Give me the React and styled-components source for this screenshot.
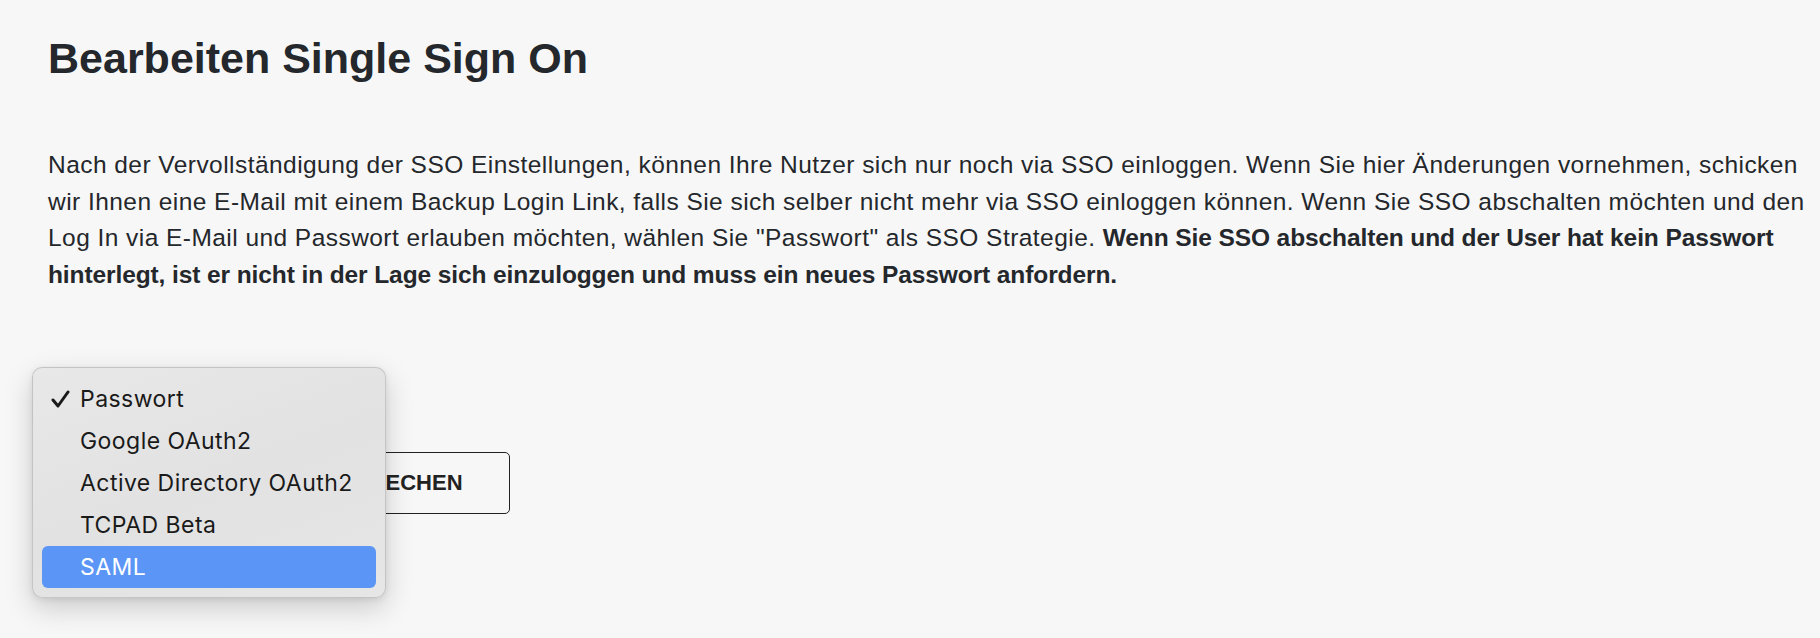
import styled, { createGlobalStyle } from "styled-components";

const COLORS = {
  page: "#f7f7f7",
  text: "#24272b",
  highlight: "#5b95f6",
};

const GlobalStyle = createGlobalStyle`
  html, body {
    margin: 0;
    padding: 0;
    background: ${COLORS.page};
  }
  body {
    font-family: "Liberation Sans", Arial, Helvetica, sans-serif;
    color: ${COLORS.text};
  }
`;

const Page = styled.main`
  min-height: 638px;
  box-sizing: border-box;
  padding: 34px 14px 0 48px;
`;

const Title = styled.h1`
  margin: 0;
  font-size: 43px;
  line-height: 1.15;
  font-weight: 700;
`;

const Intro = styled.p`
  margin: 64px 0 0;
  font-size: 24.5px;
  letter-spacing: 0.45px;
  line-height: 36.5px;
  strong {
    font-weight: 700;
    letter-spacing: -0.1px;
  }
`;

const Form = styled.form`
  position: relative;
  margin-top: 85px;
`;

const SelectField = styled.div`
  width: 300px;
  height: 42px;
  box-sizing: border-box;
  border: 1px solid #c8c8c8;
  border-radius: 4px;
  background: #fff;
  font-size: 20px;
  line-height: 40px;
  padding: 0 12px;
`;

const ButtonRow = styled.div`
  display: flex;
  gap: 16px;
  margin-top: 32px;
`;

const Button = styled.button`
  height: 62px;
  padding: 0 46px;
  border: 1px solid #222;
  border-radius: 5px;
  background: ${(p) => (p.$primary ? "#222" : "transparent")};
  color: ${(p) => (p.$primary ? "#fff" : "#222")};
  font-family: "Liberation Sans", Arial, sans-serif;
  font-size: 22px;
  font-weight: 700;
  text-transform: uppercase;
  cursor: pointer;
`;

const SaveButton = styled(Button)`
  width: 211px;
  padding: 0;
`;

const Menu = styled.ul`
  position: absolute;
  top: -11px;
  left: -16px;
  width: 354px;
  box-sizing: border-box;
  margin: 0;
  padding: 10px 9px 9px;
  list-style: none;
  border: 1px solid rgba(0, 0, 0, 0.14);
  border-radius: 10px;
  background: linear-gradient(160deg, #e8e8e8 0%, #e2e2e2 50%, #e6e6e6 100%);
  box-shadow: 0 10px 28px rgba(0, 0, 0, 0.18), 0 2px 6px rgba(0, 0, 0, 0.08);
  font-family: Inter, "Noto Sans", sans-serif;
`;

const Option = styled.li`
  position: relative;
  height: 42px;
  display: flex;
  align-items: center;
  padding-left: 38px;
  border-radius: 6px;
  font-size: 23px;
  letter-spacing: 0.45px;
  color: ${(p) => (p.$active ? "#fff" : "#1a1a1a")};
  background: ${(p) => (p.$active ? COLORS.highlight : "transparent")};
`;

const Check = styled.svg`
  position: absolute;
  left: 9px;
  top: 12px;
  width: 19px;
  height: 18px;
`;

const options = ["Passwort", "Google OAuth2", "Active Directory OAuth2", "TCPAD Beta", "SAML"];

export default function App() {
  const selected = "Passwort";
  const hovered = "SAML";

  return (
    <>
      <GlobalStyle />
      <Page>
        <Title>Bearbeiten Single Sign On</Title>
        <Intro>
          Nach der Vervollständigung der SSO Einstellungen, können Ihre Nutzer sich nur noch via SSO
          einloggen. Wenn Sie hier Änderungen vornehmen, schicken wir Ihnen eine E-Mail mit einem Backup
          Login Link, falls Sie sich selber nicht mehr via SSO einloggen können. Wenn Sie SSO abschalten
          möchten und den Log In via E-Mail und Passwort erlauben möchten, wählen Sie "Passwort" als SSO
          Strategie.{" "}
          <strong>
            Wenn Sie SSO abschalten und der User hat kein Passwort hinterlegt, ist er nicht in der Lage
            sich einzuloggen und muss ein neues Passwort anfordern.
          </strong>
        </Intro>
        <Form onSubmit={(e) => e.preventDefault()}>
          <SelectField>{selected}</SelectField>
          <ButtonRow>
            <SaveButton $primary type="submit">Speichern</SaveButton>
            <Button type="button">Abbrechen</Button>
          </ButtonRow>
          <Menu>
            {options.map((o) => (
              <Option key={o} $active={o === hovered}>
                {o === selected && (
                  <Check viewBox="0 0 19 18">
                    <polyline
                      points="2,10 7,16 17,2"
                      fill="none"
                      stroke="#1a1a1a"
                      strokeWidth="3"
                      strokeLinecap="round"
                      strokeLinejoin="round"
                    />
                  </Check>
                )}
                {o}
              </Option>
            ))}
          </Menu>
        </Form>
      </Page>
    </>
  );
}
